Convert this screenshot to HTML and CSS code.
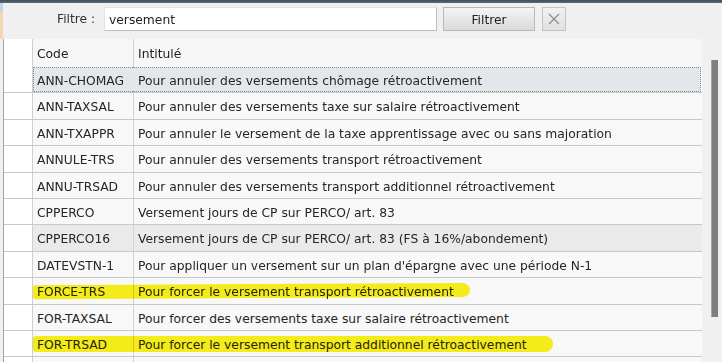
FILE: index.html
```html
<!DOCTYPE html>
<html lang="fr">
<head>
    <meta charset="UTF-8">
    <title>Filtre des rubriques</title>
    <link rel="stylesheet" href="styles.css">
</head>
<body>
    <div class="topbar"></div>
    <div class="page">
        <div class="side">
            <span class="side-blue"></span>
            <span class="side-orange"></span>
        </div>
        <div class="main">
            <div class="filter">
                <label for="filtre">Filtre :</label>
                <input type="text" id="filtre" value="versement">
                <button class="btn">Filtrer</button>
                <button class="btn-clear" title="Effacer">
                    <svg width="12" height="12" viewBox="0 0 12 12"><path d="M1 1 L11 11 M11 1 L1 11" stroke="#8c8c8c" stroke-width="1.2" fill="none"/></svg>
                </button>
            </div>
            <div class="list">
                <div class="grid">
                    <div class="row head">
                        <div class="c0"></div><div class="c1">Code</div><div class="c2">Intitulé</div>
                    </div>
                    <div class="row selected">
                        <div class="c0"></div><div class="c1">ANN-CHOMAG</div><div class="c2">Pour annuler des versements chômage rétroactivement</div>
                    </div>
                    <div class="row">
                        <div class="c0"></div><div class="c1">ANN-TAXSAL</div><div class="c2">Pour annuler des versements taxe sur salaire rétroactivement</div>
                    </div>
                    <div class="row">
                        <div class="c0"></div><div class="c1">ANN-TXAPPR</div><div class="c2">Pour annuler le versement de la taxe apprentissage avec ou sans majoration</div>
                    </div>
                    <div class="row">
                        <div class="c0"></div><div class="c1">ANNULE-TRS</div><div class="c2">Pour annuler des versements transport rétroactivement</div>
                    </div>
                    <div class="row">
                        <div class="c0"></div><div class="c1">ANNU-TRSAD</div><div class="c2">Pour annuler des versements transport additionnel rétroactivement</div>
                    </div>
                    <div class="row">
                        <div class="c0"></div><div class="c1">CPPERCO</div><div class="c2">Versement jours de CP sur PERCO/ art. 83</div>
                    </div>
                    <div class="row hover">
                        <div class="c0"></div><div class="c1">CPPERCO16</div><div class="c2">Versement jours de CP sur PERCO/ art. 83 (FS à 16%/abondement)</div>
                    </div>
                    <div class="row">
                        <div class="c0"></div><div class="c1">DATEVSTN-1</div><div class="c2">Pour appliquer un versement sur un plan d'épargne avec une période N-1</div>
                    </div>
                    <div class="row">
                        <div class="c0"></div><div class="c1">FORCE-TRS</div><div class="c2">Pour forcer le versement transport rétroactivement</div>
                        <span class="marker marker-1"></span>
                    </div>
                    <div class="row">
                        <div class="c0"></div><div class="c1">FOR-TAXSAL</div><div class="c2">Pour forcer des versements taxe sur salaire rétroactivement</div>
                    </div>
                    <div class="row">
                        <div class="c0"></div><div class="c1">FOR-TRSAD</div><div class="c2">Pour forcer le versement transport additionnel rétroactivement</div>
                        <span class="marker marker-2"></span>
                    </div>
                    <div class="row">
                        <div class="c0"></div><div class="c1"></div><div class="c2"></div>
                    </div>
                </div>
                <div class="scroll"><div class="thumb"></div></div>
            </div>
        </div>
    </div>
</body>
</html>
```

FILE: styles.css
```css
body {
    margin: 0;
    background-color: #f0f0f0;
    font-family: "DejaVu Sans", Verdana, sans-serif;
    font-size: 12.3px;
    color: #262626;
    overflow: hidden;
}
.topbar {
    height: 3px;
    background: linear-gradient(#3f4e5e, #5a6a7a);
}
.page {
    display: flex;
    height: 359px;
}
.side {
    width: 3px;
    display: flex;
    flex-direction: column;
}
.side-blue {
    height: 9px;
    background-color: #c9d3de;
}
.side-orange {
    height: 27px;
    background-color: #f2d7b6;
}
.main {
    flex: 1;
    display: flex;
    flex-direction: column;
}
.filter {
    height: 32px;
    padding-top: 4px;
    padding-left: 54px;
    display: flex;
    align-items: flex-start;
}
.filter label {
    width: 40px;
    height: 24px;
    line-height: 25px;
    margin-right: 7px;
    color: #333;
}
.filter input {
    box-sizing: border-box;
    width: 333px;
    height: 24px;
    margin: 0;
    padding: 1px 4px 0;
    border: 1px solid #b4c2d0;
    border-top-color: #dfe4ea;
    border-left-color: #dfe4ea;
    background-color: white;
    font-family: inherit;
    font-size: 12.3px;
    color: #222;
}
.btn {
    box-sizing: border-box;
    width: 92px;
    height: 24px;
    margin-left: 6px;
    border: 1px solid #b8b8b8;
    background: linear-gradient(#f4f4f4, #dadada);
    font-family: inherit;
    font-size: 12.3px;
    color: #222;
    padding: 1px 0 0;
}
.btn-clear {
    box-sizing: border-box;
    width: 24px;
    height: 24px;
    margin-left: 7px;
    border: 1px solid #c4c4c4;
    background: linear-gradient(#f2f2f2, #e0e0e0);
    padding: 0;
    display: flex;
    align-items: center;
    justify-content: center;
}
.list {
    flex: 1;
    display: flex;
    border-left: 1px solid #a6a6a6;
    min-height: 0;
}
.grid {
    width: 698px;
    background-color: white;
    overflow: hidden;
}
.row {
    position: relative;
    display: flex;
    height: 26.4px;
    box-sizing: border-box;
    border-bottom: 1px solid #c8c8c8;
    line-height: 28px;
}
.row.head {
    height: 28px;
    line-height: 31px;
    border-bottom: none;
    color: #1e1e1e;
}
.c0 {
    width: 28px;
    background-color: white;
    border-right: 1px solid #cfcfcf;
}
.c1 {
    width: 96px;
    padding-left: 4px;
    background-color: #f8f8f8;
    border-right: 1px solid #d2d2d2;
    white-space: nowrap;
}
.c2 {
    flex: 1;
    padding-left: 4px;
    background-color: #f8f8f8;
    white-space: nowrap;
}
.head .c1, .head .c2 {
    background-color: #f6f6f6;
}
.selected .c1, .selected .c2 {
    background-color: #e3e7eb;
    border-top: 1px dotted #8a8a8a;
    border-bottom: 1px dotted #8a8a8a;
    line-height: 26px;
}
.selected .c1 {
    border-left: 1px dotted #8a8a8a;
    border-right: none;
    width: 96px;
    padding-left: 3px;
}
.selected .c2 {
    border-right: 1px dotted #8a8a8a;
    margin-right: 1px;
    padding-left: 5px;
}
.hover .c1, .hover .c2 {
    background-color: #eaeaea;
}
.marker {
    position: absolute;
    left: 29px;
    background-color: #fbf21a;
    mix-blend-mode: multiply;
    border-radius: 3px 8px 8px 3px;
}
.marker-1 {
    top: 6px;
    width: 437px;
    height: 14px;
    transform: rotate(-0.3deg);
}
.marker-2 {
    top: 5px;
    width: 520px;
    height: 16px;
}
.scroll {
    flex: 1;
    position: relative;
}
.thumb {
    position: absolute;
    top: 21px;
    left: 9px;
    width: 6px;
    height: 257px;
    background-color: #7e7e7e;
    border-left: 1px solid #a4a4a4;
}
```
